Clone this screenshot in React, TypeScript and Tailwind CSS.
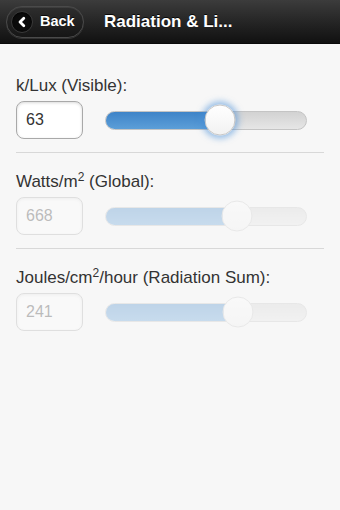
import React from "react";

type Field = {
  label: React.ReactNode;
  value: string;
  pct: number;
  disabled?: boolean;
};

const FIELDS: Field[] = [
  { label: <>k/Lux (Visible):</>, value: "63", pct: 57 },
  {
    label: (
      <>
        Watts/m<sup className="text-[12px]">2</sup> (Global):
      </>
    ),
    value: "668",
    pct: 65.5,
    disabled: true,
  },
  {
    label: (
      <>
        Joules/cm<sup className="text-[12px]">2</sup>/hour (Radiation Sum):
      </>
    ),
    value: "241",
    pct: 66,
    disabled: true,
  },
];

function Slider({ pct, disabled }: { pct: number; disabled?: boolean }) {
  return (
    <div className="relative ml-[22px] mr-[17px] h-[19px] flex-1">
      <div className="absolute inset-0 overflow-hidden rounded-full border border-[#c4c4c4] bg-gradient-to-b from-[#d2d2d2] to-[#e6e6e6]">
        <div
          className="h-full bg-gradient-to-b from-[#3e84c8] to-[#5c9ed8]"
          style={{ width: `${pct}%` }}
        />
      </div>
      <div
        className={`absolute top-1/2 h-[31px] w-[31px] -translate-x-1/2 -translate-y-1/2 rounded-full border border-[#c8c8c8] bg-gradient-to-b from-white to-[#f2f2f2] ${
          disabled ? "" : "shadow-[0_0_6px_3px_rgba(70,140,215,0.55)]"
        }`}
        style={{ left: `${pct}%` }}
      />
    </div>
  );
}

export default function App() {
  return (
    <div className="min-h-[510px] w-[340px] bg-[#f7f7f7] font-['Liberation_Sans',Arial,sans-serif] text-[#333]">
      {/* ---- Header ---- */}
      <header className="flex h-[44px] items-center border-b border-[#0a0a0a] bg-gradient-to-b from-[#3c3c3c] to-[#111111] px-[6px]">
        <button
          type="button"
          className="flex h-[32px] w-[78px] items-center rounded-full border border-[#4a4a4a] bg-gradient-to-b from-[#2e2e2e] to-[#161616] pl-[4px] shadow-[inset_0_1px_0_rgba(255,255,255,0.08),0_1px_0_rgba(255,255,255,0.12)]"
        >
          <span className="flex h-[22px] w-[22px] items-center justify-center rounded-full border border-[#3a3a3a] bg-[#0b0b0b] shadow-[inset_0_1px_2px_rgba(0,0,0,0.8)]">
            <svg viewBox="0 0 12 12" className="h-[12px] w-[12px]" aria-hidden="true">
              <path
                d="M7.8 2.2 4 6l3.8 3.8"
                fill="none"
                stroke="white"
                strokeWidth={2.8}
                strokeLinecap="round"
                strokeLinejoin="round"
              />
            </svg>
          </span>
          <span className="ml-[7px] text-[14.5px] font-bold text-white [text-shadow:0_-1px_0_rgba(0,0,0,0.8)]">
            Back
          </span>
        </button>
        <h1 className="ml-[20px] text-[17px] font-bold text-white [text-shadow:0_-1px_0_rgba(0,0,0,0.8)]">
          Radiation &amp; Li...
        </h1>
      </header>

      {/* ---- Fields ---- */}
      <main className="px-[16px] pt-[13px]">
        {FIELDS.map((f, i) => (
          <section
            key={i}
            className={`pb-[13px] pt-[19px] ${i < FIELDS.length - 1 ? "border-b border-[#d8d8d8]" : ""}`}
          >
            <label className="block h-[20px] text-[17px] leading-[20px]">{f.label}</label>
            <div className={`mt-[5px] flex items-center ${f.disabled ? "opacity-30" : ""}`}>
              <div className="flex h-[38px] w-[67px] items-center rounded-[8px] border border-[#a9a9a9] bg-white pl-[9px] text-[16px] shadow-[inset_0_1px_3px_rgba(0,0,0,0.15)]">
                {f.value}
              </div>
              <Slider pct={f.pct} disabled={f.disabled} />
            </div>
          </section>
        ))}
      </main>
    </div>
  );
}
